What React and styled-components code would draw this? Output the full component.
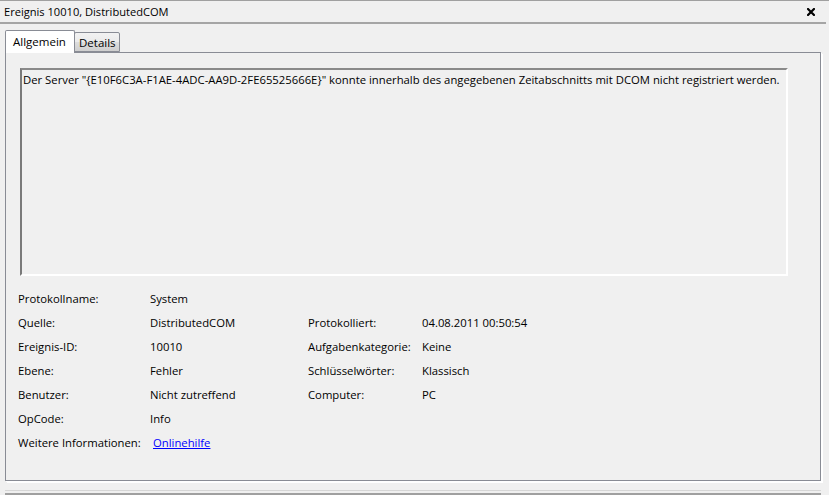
import React from "react";
import styled, { createGlobalStyle } from "styled-components";

const Global = createGlobalStyle`
  html, body { margin: 0; padding: 0; background: #f0f0f0; }
  body { font-family: "Open Sans", "Noto Sans", sans-serif; font-size: 11px; color: #000; }
`;

const Window = styled.div`
  width: 829px;
  height: 495px;
  box-sizing: border-box;
  background: #f0f0f0;
  display: flex;
  flex-direction: column;
  border-top: 1px solid #a0a0a0;
  overflow: hidden;
`;

const TitleBar = styled.div`
  height: 21px;
  display: flex;
  align-items: center;
  justify-content: space-between;
  padding: 0 11px 0 4px;
  border-bottom: 2px solid #a5a5a5;
  margin-right: 3px;
`;

const Title = styled.span`
  font-size: 11.1px;
  line-height: 1;
`;

const CloseButton = styled.button`
  border: 0;
  background: none;
  padding: 0;
  width: 8px;
  height: 8px;
  display: flex;
  margin-top: 1px;
`;

const Body = styled.div`
  flex: 1;
  display: flex;
  flex-direction: column;
  padding: 6px 8px 0 5px;
`;

const TabStrip = styled.div`
  display: flex;
  align-items: flex-end;
  height: 22px;
  position: relative;
  z-index: 1;
`;

const Tab = styled.div`
  box-sizing: border-box;
  border: 1px solid #898c95;
  border-bottom: ${(p) => (p.$active ? "0" : "1px solid #898c95")};
  height: ${(p) => (p.$active ? "23px" : "20px")};
  margin-bottom: ${(p) => (p.$active ? "-1px" : "0")};
  padding: ${(p) => (p.$active ? "2px 7px 0 7px" : "1px 4px 0 4px")};
  margin-left: ${(p) => (p.$active ? "0" : "-1px")};
  background: ${(p) =>
    p.$active ? "#ffffff" : "linear-gradient(#f2f2f2, #ebebeb 50%, #dddddd 51%, #cfcfcf)"};
  border-radius: 2px 2px 0 0;
  font-size: 11.5px;
  line-height: 17px;
  width: ${(p) => p.$w}px;
`;

const Panel = styled.div`
  box-sizing: border-box;
  height: 429px;
  border: 1px solid #898c95;
  background: #f0f0f0;
  box-shadow: 1px 1px 0 #ffffff, 2px 2px 0 #ffffff;
  padding: 15px 32px 0 14px;
  display: flex;
  flex-direction: column;
`;

const Description = styled.div`
  box-sizing: border-box;
  height: 208px;
  border-top: 2px solid #8a8a8a;
  border-left: 2px solid #7a7a7a;
  border-right: 2px solid #ffffff;
  border-bottom: 2px solid #ffffff;
  padding: 2px 1px;
  font-size: 11.3px;
  line-height: 16px;
  white-space: nowrap;
`;

const Props = styled.div`
  display: grid;
  grid-template-columns: 132px 158px 114px 1fr;
  grid-auto-rows: 24px;
  margin-top: 11px;
  margin-left: -2px;
  font-size: 11.3px;
  align-items: center;
`;

const Cell = styled.div`
  grid-column: ${(p) => p.$col};
  line-height: 16px;
  white-space: nowrap;
`;

const Link = styled.a`
  color: #0000ff;
  text-decoration: underline;
  margin-left: 3px;
`;

const Footer = styled.div`
  margin-top: 9px;
  height: 5px;
  border-top: 1px solid #d6d6d6;
  border-bottom: 2px solid #a0a0a0;
  box-sizing: border-box;
`;

const rows = [
  ["Protokollname:", "System", null, null],
  ["Quelle:", "DistributedCOM", "Protokolliert:", "04.08.2011 00:50:54"],
  ["Ereignis-ID:", "10010", "Aufgabenkategorie:", "Keine"],
  ["Ebene:", "Fehler", "Schlüsselwörter:", "Klassisch"],
  ["Benutzer:", "Nicht zutreffend", "Computer:", "PC"],
  ["OpCode:", "Info", null, null],
];

export default function App() {
  return (
    <>
      <Global />
      <Window>
        <TitleBar>
          <Title>Ereignis 10010, DistributedCOM</Title>
          <CloseButton aria-label="Schließen">
            <svg width="8" height="8" viewBox="0 0 8 8">
              <path d="M1 1 L7 7 M7 1 L1 7" stroke="#000" strokeWidth="2.2" strokeLinecap="square" />
            </svg>
          </CloseButton>
        </TitleBar>
        <Body>
          <TabStrip>
            <Tab $active $w={70}>Allgemein</Tab>
            <Tab $w={46}>Details</Tab>
          </TabStrip>
          <Panel>
            <Description>
              Der Server "{"{"}E10F6C3A-F1AE-4ADC-AA9D-2FE65525666E{"}"}" konnte innerhalb des angegebenen Zeitabschnitts mit DCOM nicht registriert werden.
            </Description>
            <Props>
              {rows.map((r, i) => (
                <React.Fragment key={i}>
                  <Cell $col={1}>{r[0]}</Cell>
                  <Cell $col={2}>{r[1]}</Cell>
                  {r[2] && <Cell $col={3}>{r[2]}</Cell>}
                  {r[3] && <Cell $col={4}>{r[3]}</Cell>}
                </React.Fragment>
              ))}
              <Cell $col={1}>Weitere Informationen:</Cell>
              <Cell $col={2}>
                <Link href="#">Onlinehilfe</Link>
              </Cell>
            </Props>
          </Panel>
          <Footer />
        </Body>
      </Window>
    </>
  );
}
